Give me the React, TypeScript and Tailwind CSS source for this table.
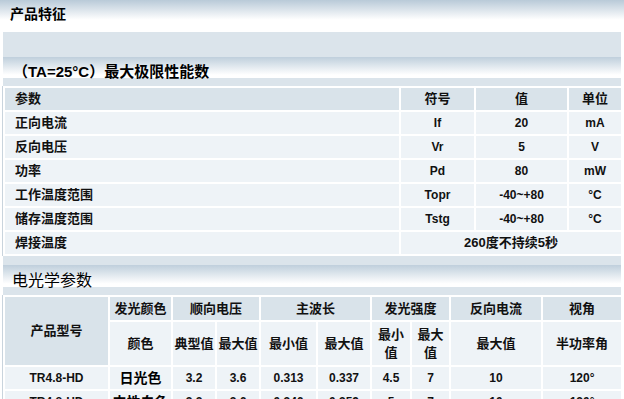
import React from "react";

const font = { fontFamily: '"Liberation Sans", "Noto Sans CJK SC", sans-serif' };

const hd = "bg-[#d9e3ea] text-center align-middle p-0";
const cl = "bg-[#eef3f7] text-center align-middle p-0";

export default function App() {
  const rows1 = [
    ["正向电流", "If", "20", "mA"],
    ["反向电压", "Vr", "5", "V"],
    ["功率", "Pd", "80", "mW"],
    ["工作温度范围", "Topr", "-40~+80", "°C"],
    ["储存温度范围", "Tstg", "-40~+80", "°C"],
  ];
  const rows2 = [
    ["TR4.8-HD", "日光色", "3.2", "3.6", "0.313", "0.337", "4.5", "7", "10", "120°"],
    ["TR4.8-HD", "中性白色", "3.2", "3.6", "0.346", "0.359", "5", "7", "10", "120°"],
  ];
  return (
    <div className="w-[624px] h-[399px] overflow-hidden bg-white text-[#111]" style={font}>
      <div className="h-[32px] bg-[linear-gradient(to_bottom,#b9cad8,#ffffff_62%)] pl-[10px] pt-[5px]">
        <div className="text-[14px] leading-[18px] font-bold text-black">产品特征</div>
      </div>
      <div className="mx-[3px] h-[25px] bg-[#dbe4eb]" />
      <div className="mx-[3px] h-[21px] bg-[linear-gradient(to_bottom,#bfcfdc,#ffffff_85%)] pl-[10px] pt-[6px]">
        <div className="text-[15px] leading-[18px] font-bold text-black">（TA=25°C）最大极限性能数</div>
      </div>
      <div className="mx-[3px] h-[8px] bg-[#dbe4eb]" />
      <table className="ml-[2px] w-[621px] table-fixed border-separate border-spacing-0.5 border-l border-[#c9d4dd] bg-white">
        <colgroup>
          <col className="w-[394px]" />
          <col className="w-[73px]" />
          <col className="w-[91px]" />
          <col className="w-[52px]" />
        </colgroup>
        <tbody>
          <tr className="h-[22px]">
            <td className={`${hd} !text-left pl-[10px] text-[13px] font-bold`}>参数</td>
            <td className={`${hd} text-[13px] font-bold`}>符号</td>
            <td className={`${hd} text-[13px] font-bold`}>值</td>
            <td className={`${hd} text-[13px] font-bold`}>单位</td>
          </tr>
          {rows1.map((r) => (
            <tr key={r[0]} className="h-[22px]">
              <td className={`${cl} !text-left pl-[10px] text-[13px] font-bold`}>{r[0]}</td>
              <td className={`${cl} text-[12px] font-bold`}>{r[1]}</td>
              <td className={`${cl} text-[12px] font-bold`}>{r[2]}</td>
              <td className={`${cl} text-[12px] font-bold`}>{r[3]}</td>
            </tr>
          ))}
          <tr className="h-[22px]">
            <td className={`${cl} !text-left pl-[10px] text-[13px] font-bold`}>焊接温度</td>
            <td colSpan={3} className={`${cl} text-[13px] font-bold`}>260度不持续5秒</td>
          </tr>
        </tbody>
      </table>
      <div className="mx-[3px] h-[9px] bg-[#dbe4eb]" />
      <div className="mx-[3px] h-[22px] bg-[linear-gradient(to_bottom,#bfcfdc,#ffffff_85%)] pl-[9px] pt-[7px]">
        <div className="text-[16px] leading-[18px] text-black">电光学参数</div>
      </div>
      <div className="mx-[3px] h-[8px] bg-[#dbe4eb]" />
      <table className="ml-[2px] w-[621px] table-fixed border-separate border-spacing-0.5 border-l border-[#c9d4dd] bg-white">
        <colgroup>
          <col className="w-[103px]" />
          <col className="w-[61px]" />
          <col className="w-[42px]" />
          <col className="w-[42px]" />
          <col className="w-[55px]" />
          <col className="w-[52px]" />
          <col className="w-[38px]" />
          <col className="w-[37px]" />
          <col className="w-[90px]" />
          <col className="w-[78px]" />
        </colgroup>
        <tbody>
          <tr className="h-[23px]">
            <td rowSpan={2} className={`${hd} text-[13px] font-bold`}>产品型号</td>
            <td className={`${hd} text-[13px] font-bold`}>发光颜色</td>
            <td colSpan={2} className={`${hd} text-[13px] font-bold`}>顺向电压</td>
            <td colSpan={2} className={`${hd} text-[13px] font-bold`}>主波长</td>
            <td colSpan={2} className={`${hd} text-[13px] font-bold`}>发光强度</td>
            <td className={`${hd} text-[13px] font-bold`}>反向电流</td>
            <td className={`${hd} text-[13px] font-bold`}>视角</td>
          </tr>
          <tr className="h-[43px]">
            <td className={`${cl} text-[13px] font-bold`}>颜色</td>
            <td className={`${cl} text-[13px] font-bold`}>典型值</td>
            <td className={`${cl} text-[13px] font-bold`}>最大值</td>
            <td className={`${cl} text-[13px] font-bold`}>最小值</td>
            <td className={`${cl} text-[13px] font-bold`}>最大值</td>
            <td className={`${cl} text-[13px] font-bold leading-[18px] px-[4px]`}>最小值</td>
            <td className={`${cl} text-[13px] font-bold leading-[18px] px-[4px]`}>最大值</td>
            <td className={`${cl} text-[13px] font-bold`}>最大值</td>
            <td className={`${cl} text-[13px] font-bold`}>半功率角</td>
          </tr>
          {rows2.map((r, i) => (
            <tr key={i} className="h-[22px]">
              {r.map((c, j) => (
                <td
                  key={j}
                  className={`${cl} font-bold ${j === 1 ? "text-[14px] text-black" : "text-[12px]"}`}
                >
                  {c}
                </td>
              ))}
            </tr>
          ))}
        </tbody>
      </table>
    </div>
  );
}
